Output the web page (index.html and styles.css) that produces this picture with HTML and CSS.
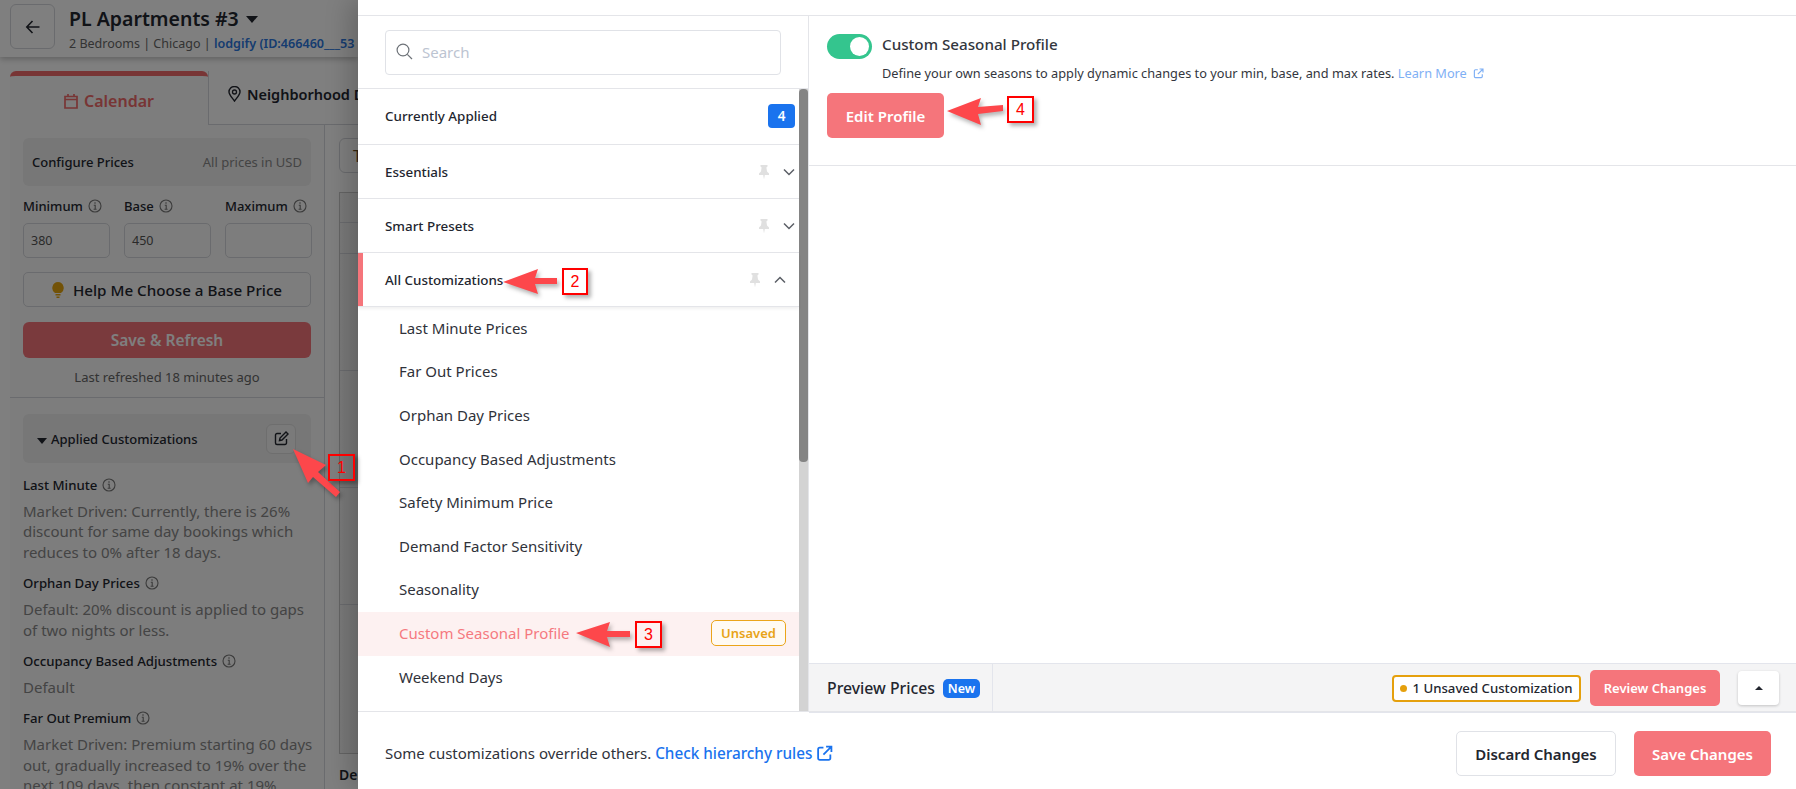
FILE: index.html
```html
<!DOCTYPE html>
<html lang="en">
<head>
<meta charset="utf-8">
<title>Custom Seasonal Profile</title>
<link rel="stylesheet" href="styles.css">
</head>
<body>
<svg width="0" height="0" class="defs">
  <symbol id="info" viewBox="0 0 14 14"><circle cx="7" cy="7" r="6" fill="none" stroke="currentColor" stroke-width="1.1"/><path d="M5.8 6.2H7.2V10M5.6 10.2H8.6" fill="none" stroke="currentColor" stroke-width="1.1"/><circle cx="7" cy="4" r=".8" fill="currentColor"/></symbol>
  <symbol id="pin" viewBox="0 0 12 16"><path d="M2.5 1H9.5V2.6L8.4 3.4 9 7.6 11 9.6V11H6.8L6 15.5 5.2 11H1V9.6L3 7.6 3.6 3.4 2.5 2.6Z" fill="currentColor"/></symbol>
  <symbol id="chev-d" viewBox="0 0 12 8"><path d="M1 1.5 6 6.5 11 1.5" fill="none" stroke="currentColor" stroke-width="1.5"/></symbol>
  <symbol id="chev-u" viewBox="0 0 12 8"><path d="M1 6.5 6 1.5 11 6.5" fill="none" stroke="currentColor" stroke-width="1.5"/></symbol>
  <symbol id="ext" viewBox="0 0 16 16"><path d="M7 2.5H3.5A1.5 1.5 0 0 0 2 4V12.500A1.500 1.500 0 0 0 3.500 14H12A1.500 1.500 0 0 0 13.500 12.500V9M9.500 1.500H14.500V6.500M14.200 1.800 7 9" fill="none" stroke="currentColor" stroke-width="1.700"/></symbol>
</svg>

<div class="app">
  <section class="page">
    <header class="page-head">
      <button class="back" type="button"><svg width="16" height="16" viewBox="0 0 16 16"><path d="M14.500 8H2M7.500 2 1.800 8 7.500 14" fill="none" stroke="currentColor" stroke-width="1.600"/></svg></button>
      <div class="head-text">
        <div class="head-title">PL Apartments #3 <span class="caret"></span></div>
        <div class="head-sub">2 Bedrooms | Chicago | <span class="head-link">lodgify (ID:466460___53</span></div>
      </div>
    </header>
    <div class="tabs">
      <div class="tab tab-on"><svg width="14" height="16" viewBox="0 0 14 16"><path d="M1 3.500H13V15H1ZM1 6.500H13M4 1V4M10 1V4" fill="none" stroke="currentColor" stroke-width="1.700"/></svg>Calendar</div>
      <div class="tab tab-off"><svg width="13" height="16" viewBox="0 0 13 16"><path d="M6.500 15C4 11.500 1 8.700 1 6A5.500 5.500 0 0 1 12 6C12 8.700 9 11.500 6.500 15Z" fill="none" stroke="currentColor" stroke-width="1.400"/><circle cx="6.500" cy="6" r="2" fill="none" stroke="currentColor" stroke-width="1.300"/></svg>Neighborhood D</div>
    </div>
    <div class="page-body">
      <aside class="side">
        <div class="side-top">
          <div class="box-head"><span class="box-title">Configure Prices</span><span class="box-note">All prices in USD</span></div>
          <div class="fields">
            <div class="field"><div class="label">Minimum <svg class="i"><use href="#info"/></svg></div><div class="input">380</div></div>
            <div class="field"><div class="label">Base <svg class="i"><use href="#info"/></svg></div><div class="input">450</div></div>
            <div class="field"><div class="label">Maximum <svg class="i"><use href="#info"/></svg></div><div class="input"></div></div>
          </div>
          <div class="help"><svg width="12" height="16" viewBox="0 0 12 16"><path d="M6 0A6 6 0 0 1 9 11H3A6 6 0 0 1 6 0ZM3.500 12H8.500V13.500H3.500ZM4.500 14.500H7.500V16H4.500Z" fill="#e5a50e"/></svg>Help Me Choose a Base Price</div>
          <div class="save-refresh">Save &amp; Refresh</div>
          <div class="refreshed">Last refreshed 18 minutes ago</div>
        </div>
        <div class="side-bottom">
          <div class="box-head applied"><span class="box-title"><span class="caret small"></span>Applied Customizations</span>
            <span class="edit"><svg width="15" height="15" viewBox="0 0 15 15"><path d="M7 2.500H3A1.500 1.500 0 0 0 1.500 4V12A1.500 1.500 0 0 0 3 13.500H11A1.500 1.500 0 0 0 12.500 12V8M5.500 9.500 6 7 12 1 14 3 8 9Z" fill="none" stroke="currentColor" stroke-width="1.400"/></svg></span></div>
          <h4 class="c-h">Last Minute <svg class="i"><use href="#info"/></svg></h4>
          <p class="c-p">Market Driven: Currently, there is 26% discount for same day bookings which reduces to 0% after 18 days.</p>
          <h4 class="c-h">Orphan Day Prices <svg class="i"><use href="#info"/></svg></h4>
          <p class="c-p">Default: 20% discount is applied to gaps of two nights or less.</p>
          <h4 class="c-h">Occupancy Based Adjustments <svg class="i"><use href="#info"/></svg></h4>
          <p class="c-p">Default</p>
          <h4 class="c-h">Far Out Premium <svg class="i"><use href="#info"/></svg></h4>
          <p class="c-p">Market Driven: Premium starting 60 days out, gradually increased to 19% over the next 109 days, then constant at 19%</p>
        </div>
      </aside>
      <main class="cal">
        <div class="cal-btn">T</div>
        <div class="cal-table">
          <div class="cal-row r1"></div><div class="cal-row r2"></div><div class="cal-row r3"></div><div class="cal-row r3"></div><div class="cal-row r3"></div><div class="cal-row r4"></div>
        </div>
        <div class="cal-foot">Der</div>
      </main>
    </div>
  </section>

  <section class="modal">
    <div class="modal-top"></div>
    <div class="modal-body">
      <div class="nav">
        <div class="search-wrap">
          <div class="search"><svg width="17" height="17" viewBox="0 0 17 17"><circle cx="7" cy="7" r="5.900" fill="none" stroke="currentColor" stroke-width="1.200"/><path d="M11.300 11.300 16 16" stroke="currentColor" stroke-width="1.200"/></svg><span>Search</span></div>
        </div>
        <div class="nav-scroll">
          <div class="nav-list">
            <div class="sec sec-1"><span>Currently Applied</span><b class="count">4</b></div>
            <div class="sec"><span>Essentials</span><svg class="pin"><use href="#pin"/></svg><svg class="chev"><use href="#chev-d"/></svg></div>
            <div class="sec"><span>Smart Presets</span><svg class="pin"><use href="#pin"/></svg><svg class="chev"><use href="#chev-d"/></svg></div>
            <div class="sec sec-on"><span>All Customizations</span><svg class="pin"><use href="#pin"/></svg><svg class="chev"><use href="#chev-u"/></svg></div>
            <div class="item">Last Minute Prices</div>
            <div class="item">Far Out Prices</div>
            <div class="item">Orphan Day Prices</div>
            <div class="item">Occupancy Based Adjustments</div>
            <div class="item">Safety Minimum Price</div>
            <div class="item">Demand Factor Sensitivity</div>
            <div class="item">Seasonality</div>
            <div class="item item-on"><span>Custom Seasonal Profile</span><span class="unsaved">Unsaved</span></div>
            <div class="item">Weekend Days</div>
          </div>
          <div class="track"><div class="thumb"></div></div>
        </div>
      </div>
      <div class="detail">
        <div class="profile">
          <div class="profile-head">
            <span class="toggle"><i></i></span>
            <div>
              <div class="profile-title">Custom Seasonal Profile</div>
              <div class="profile-desc">Define your own seasons to apply dynamic changes to your min, base, and max rates. <a class="learn">Learn More <svg width="11" height="11"><use href="#ext"/></svg></a></div>
            </div>
          </div>
          <div class="btn btn-edit">Edit Profile</div>
        </div>
        <div class="detail-fill"></div>
        <div class="preview">
          <div class="preview-l">Preview Prices <span class="new">New</span></div>
          <div class="preview-r">
            <span class="chip"><i></i>1 Unsaved Customization</span>
            <span class="btn btn-review">Review Changes</span>
            <span class="btn-up"><span class="up"></span></span>
          </div>
        </div>
      </div>
    </div>
    <footer class="foot">
      <div class="foot-note">Some customizations override others. <a class="hier">Check hierarchy rules <svg width="17" height="17"><use href="#ext"/></svg></a></div>
      <div class="foot-btns"><span class="btn btn-discard">Discard Changes</span><span class="btn btn-save">Save Changes</span></div>
    </footer>
  </section>
</div>

<svg class="arrows" width="1796" height="789" viewBox="0 0 1796 789">
  <polygon points="293,449 326,465 318,472 340,492 336,497 313,477 308,483"/>
  <polygon points="503,282 538,269 535,278 557,278 557,284 535,284 538,294"/>
  <polygon points="576,633 610,622 607,631 630,631 630,637 607,637 610,647"/>
  <polygon points="947,111 981,98 978,107 1003,105 1003,111 978,114 981,125"/>
</svg>
<div class="mark m1">1</div>
<div class="mark m2">2</div>
<div class="mark m3">3</div>
<div class="mark m4">4</div>
</body>
</html>
```
FILE: styles.css
```css
* { box-sizing: border-box; }
html, body { margin: 0; height: 100%; }
body { width: 1796px; height: 789px; overflow: hidden; font-family: "Noto Sans", "Open Sans", sans-serif; color: #23262f; background: #fff; position: relative; }
.defs { position: absolute; }
.app { display: flex; width: 1796px; height: 789px; }
a { text-decoration: none; }

/* dimmed page behind the drawer */
.page { width: 358px; flex: none; height: 789px; overflow: hidden; position: relative; background: #fff; display: flex; flex-direction: column; }
.page::after { content: ""; position: absolute; inset: 0; background: rgba(0,0,0,.5); }
.page-head { height: 57px; flex: none; display: flex; align-items: flex-start; padding: 4px 0 0 10px; gap: 14px; box-shadow: 0 2px 6px rgba(0,0,0,.25); white-space: nowrap; position: relative; }
.back { width: 45px; height: 45px; flex: none; border: 1px solid #d5d7dc; border-radius: 6px; background: #fff; display: flex; align-items: center; justify-content: center; color: #23262f; padding: 0; }
.head-title { font-size: 19.500px; font-weight: 600; line-height: 30px; }
.caret { display: inline-block; width: 0; height: 0; border: 6px solid transparent; border-top: 7px solid #23262f; border-bottom: 0; vertical-align: 3px; margin-left: 2px; }
.caret.small { border-width: 6px 5px 0; margin: 0 4px 0 0; vertical-align: 0; }
.head-sub { font-size: 12.500px; line-height: 18px; padding-top: 1px; color: #666; }
.head-link { color: #2d78e0; font-weight: 600; font-size: 12.600px; }
.tabs { display: flex; height: 68px; padding: 14px 0 0 10px; flex: none; white-space: nowrap; }
.tab { display: flex; align-items: center; justify-content: center; gap: 6px; font-size: 16px; font-weight: 600; flex: none; }
.tab-on { width: 198px; border-top: 5px solid #f06a6a; border-radius: 6px 6px 0 0; color: #f06a6a; background: #fafafa; }
.tab-off { width: 400px; padding: 0 0 8px 19px; justify-content: flex-start; border-left: 1px solid #d5d7dc; border-bottom: 1px solid #d5d7dc; font-size: 14.500px; }
.page-body { display: flex; flex: 1; padding-left: 10px; min-height: 0; }
.side { width: 315px; flex: none; background: #fafafa; border-right: 1px solid #d5d7dc; overflow: hidden; }
.side-top { padding: 13px 13px 0; height: 273px; border-bottom: 1px solid #d5d7dc; }
.box-head { height: 48px; background: #eee; border-radius: 6px; display: flex; align-items: center; justify-content: space-between; padding: 0 9px; font-size: 13px; }
.box-title { font-weight: 500; }
.box-note { color: #888; font-size: 13px; }
.fields { display: grid; grid-template-columns: repeat(3, 87px); gap: 0 14px; margin-top: 10px; }
.label { font-size: 13px; font-weight: 500; line-height: 20px; white-space: nowrap; display: flex; align-items: center; gap: 5px; }
.i { width: 14px; height: 14px; color: #777; flex: none; }
.input { height: 35px; border: 1px solid #d5d7dc; border-radius: 5px; margin-top: 7px; font-size: 12.500px; padding: 0 7px; line-height: 34px; color: #555; background: #fafafa; }
.help { height: 35px; border: 1px solid #d5d7dc; border-radius: 5px; margin-top: 14px; display: flex; align-items: center; justify-content: center; gap: 9px; font-size: 15.200px; font-weight: 500; white-space: nowrap; }
.save-refresh { height: 36px; margin-top: 15px; background: #f5757b; border-radius: 6px; display: flex; align-items: center; justify-content: center; font-size: 15.500px; font-weight: 600; color: #fff; }
.refreshed { text-align: center; font-size: 13px; color: #666; margin-top: 9px; line-height: 20px; }
.side-bottom { padding: 16px 13px 0; }
.applied { height: 49px; padding: 0 15px 0 14px; margin-bottom: 10px; }
.edit { width: 30px; height: 30px; border: 1px solid #ddd; border-radius: 6px; display: flex; align-items: center; justify-content: center; background: #f4f4f4; }
.c-h { margin: 0; font-size: 13.200px; line-height: 20px; font-weight: 500; display: flex; align-items: center; gap: 5px; padding-top: 2px; white-space: nowrap; }
.c-p { margin: 6px -6px 9px 0; font-size: 15px; line-height: 20.400px; color: #888; }
.cal { flex: 1; padding: 13px 0 0 14px; min-width: 0; white-space: nowrap; }
.cal-btn { width: 60px; height: 35px; border: 1px solid #d5d7dc; border-radius: 6px; padding: 6px 13px; font-size: 16px; color: #6b4a1c; }
.cal-table { margin-top: 19px; height: 562px; border: 1px solid #c9c9c9; width: 60px; background: linear-gradient(90deg,#f4f4f4,#e8e8e8); }
.cal-row { border-bottom: 1px solid #d5d7dc; }
.r1 { height: 30px; } .r2 { height: 31px; } .r3 { height: 117px; } .r4 { height: 100px; border: 0; }
.cal-foot { font-size: 14px; font-weight: 600; margin-top: 11px; }

/* drawer */
.modal { flex: 1; min-width: 0; height: 789px; display: flex; flex-direction: column; background: #fff; box-shadow: -8px 0 24px rgba(0,0,0,.2); position: relative; }
.modal-top { height: 16px; flex: none; border-bottom: 1px solid #e4e5e9; }
.modal-body { height: 695px; flex: none; display: flex; }
.nav { width: 451px; flex: none; border-right: 1px solid #e4e5e9; display: flex; flex-direction: column; min-height: 0; }
.search-wrap { height: 73px; flex: none; padding: 14px 27px 0; border-bottom: 1px solid #e4e5e9; }
.search { width: 396px; height: 45px; border: 1px solid #e0e2e7; border-radius: 4px; display: flex; align-items: center; gap: 9px; padding: 0 0 2px 10px; color: #6d7278; font-size: 15px; }
.search span { color: #bcc4d1; }
.nav-scroll { flex: 1; min-height: 0; display: flex; overflow: hidden; }
.nav-list { width: 441px; flex: none; }
.track { width: 9px; flex: none; background: #d3d3d3; }
.thumb { height: 373px; background: #848484; border-radius: 4px; }
.sec { height: 54px; display: flex; align-items: center; border-bottom: 1px solid #e4e5e9; padding: 0 4px 0 27px; font-size: 13.400px; font-weight: 500; color: #23262f; }
.sec > span { flex: 1; }
.sec-1 { height: 56px; padding: 0 6px 1px 27px; }
.sec-on { height: 54px; box-shadow: inset 5px 0 0 #f5757b, 0 2px 3px rgba(0,0,0,.06); padding-right: 13px; position: relative; }
.pin { width: 12px; height: 16px; color: #e0e0e0; margin-right: 13px; }
.chev { width: 12px; height: 8px; color: #5b5f66; }
.count { width: 27px; height: 24px; background: #1a73ee; border-radius: 4px; color: #fff; font-size: 13.500px; font-weight: 600; display: flex; align-items: center; justify-content: center; margin-right: -2px; }
.item { height: 43.600px; display: flex; align-items: center; justify-content: space-between; padding: 0 13px 2px 41px; font-size: 15px; color: #2f323a; }
.item-on { background: #fdf1f1; color: #f5797f; }
.unsaved { width: 75px; height: 26px; border: 1px solid #eba51a; border-radius: 5px; background: #fffaf3; color: #e8a317; font-size: 13px; font-weight: 600; display: flex; align-items: center; justify-content: center; }
.detail { flex: 1; min-width: 0; display: flex; flex-direction: column; }
.profile { height: 150px; flex: none; border-bottom: 1px solid #e4e5e9; padding: 18px 18px 0; }
.profile-head { display: flex; gap: 10px; }
.toggle { width: 45px; height: 25px; background: #34c58e; border-radius: 13px; flex: none; display: flex; align-items: center; justify-content: flex-end; padding-right: 3px; }
.toggle i { width: 19px; height: 19px; background: #fff; border-radius: 50%; }
.profile-title { font-size: 15.200px; font-weight: 500; line-height: 20px; color: #33363d; }
.profile-desc { font-size: 12.750px; line-height: 18px; margin-top: 10px; color: #33363d; white-space: nowrap; }
.learn { color: #7fb0f5; }
.learn svg { vertical-align: -1px; margin-left: 3px; }
.btn { display: inline-flex; align-items: center; justify-content: center; border-radius: 5px; font-weight: 600; white-space: nowrap; }
.btn-edit { width: 117px; height: 45px; background: #f5757b; color: #fff; font-size: 15px; margin-top: 11px; }
.detail-fill { flex: 1; }
.preview { height: 50px; flex: none; margin-bottom: -2px; position: relative; background: #f4f4f5; border-top: 1px solid #e3e5ec; border-bottom: 1px solid #e3e5ec; display: flex; align-items: center; justify-content: space-between; padding-right: 17px; }
.preview-l { width: 184px; height: 100%; border-right: 1px solid #e3e5ec; padding-left: 18px; display: flex; align-items: center; gap: 8px; font-size: 15.800px; font-weight: 500; white-space: nowrap; }
.new { width: 37px; height: 19px; background: #1a73ee; color: #fff; border-radius: 5px; font-size: 12.500px; font-weight: 600; display: flex; align-items: center; justify-content: center; }
.preview-r { display: flex; align-items: center; }
.chip { width: 189px; height: 27px; border: 2px solid #e5a00d; border-radius: 4px; background: #fff; display: flex; align-items: center; justify-content: center; gap: 5px; font-size: 13.200px; font-weight: 500; white-space: nowrap; }
.chip i { width: 7px; height: 7px; border-radius: 50%; background: #e5a00d; }
.btn-review { width: 130px; height: 36px; background: #f5757b; color: #fff; font-size: 13px; margin: 0 18px 0 9px; }
.btn-up { width: 41px; height: 34px; background: #fff; border-radius: 4px; box-shadow: 0 1px 3px rgba(0,0,0,.2); display: flex; align-items: center; justify-content: center; }
.up { width: 0; height: 0; border: 4px solid transparent; border-top: 0; border-bottom: 4px solid #23262f; }
.foot { flex: 1; min-height: 0; border-top: 1px solid #e4e5e9; display: flex; align-items: center; justify-content: space-between; padding: 6px 25px 0 27px; position: relative; }
.foot-note { font-size: 15px; color: #2f323a; white-space: nowrap; margin-top: -2px; }
.hier { color: #1a73ee; font-weight: 500; font-size: 15.300px; }
.hier svg { vertical-align: -3px; }
.foot-btns { display: flex; gap: 18px; }
.btn-discard { width: 160px; height: 45px; border: 1px solid #e0e2e7; color: #23262f; font-size: 15px; background: #fff; }
.btn-save { width: 137px; height: 45px; background: #f5757b; color: #fff; font-size: 15px; }

/* annotations */
.arrows { position: absolute; left: 0; top: 0; filter: drop-shadow(2px 3px 2px rgba(0,0,0,.3)); }
.arrows polygon { fill: #fd474b; }
.mark { position: absolute; border: 2px solid #f00; color: #f00; font: 16px/1 "Liberation Sans", sans-serif; display: flex; align-items: center; justify-content: center; box-shadow: 3px 3px 4px rgba(0,0,0,.3); }
.m1 { left: 328px; top: 454px; width: 27px; height: 27px; }
.m2 { left: 562px; top: 268px; width: 26px; height: 27px; }
.m3 { left: 635px; top: 621px; width: 27px; height: 27px; }
.m4 { left: 1007px; top: 96px; width: 27px; height: 27px; }
```
